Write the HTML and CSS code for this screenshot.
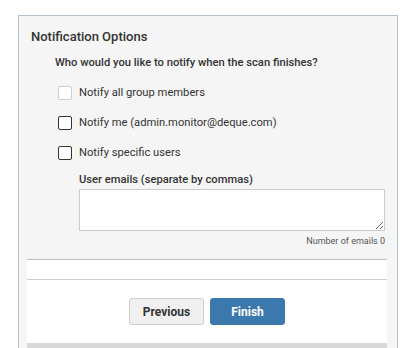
FILE: index.html
```html
<!DOCTYPE html>
<html lang="en">
<head>
    <meta charset="UTF-8">
    <meta name="viewport" content="width=device-width, initial-scale=1.0">
    <title>Notification Options</title>
    <link rel="stylesheet" href="styles.css">
</head>
<body>
    <div class="panel">
        <h2 class="panel_title">Notification Options</h2>
        <div class="options">
            <p class="question">Who would you like to notify when the scan finishes?</p>
            <label class="check check_disabled"><span class="box"></span>Notify all group members</label>
            <label class="check"><span class="box"></span>Notify me (admin.monitor@deque.com)</label>
            <label class="check"><span class="box"></span>Notify specific users</label>
            <div class="emails">
                <label for="emails" class="emails_label">User emails (separate by commas)</label>
                <textarea id="emails" class="emails_input"></textarea>
                <div class="emails_count">Number of emails 0</div>
            </div>
        </div>
        <div class="footer">
            <div class="footer_strip"></div>
            <div class="footer_buttons">
                <button class="btn">Previous</button>
                <button class="btn btn_primary">Finish</button>
            </div>
        </div>
    </div>
</body>
</html>
```

FILE: styles.css
```css
body {
    margin: 0;
    background-color: white;
    font-family: Roboto, "Liberation Sans", sans-serif;
    color: #333;
    height: 348px;
    overflow: hidden;
}
.panel {
    margin: 15px 0 0 18px;
    width: 378px;
    height: 360px;
    border: 1px solid #b6c3cc;
    border-bottom: none;
    background-color: #f5f5f5;
}
.panel_title {
    font-size: 13px;
    font-weight: 500;
    margin: 0;
    padding: 13px 0 0 12px;
    line-height: 16px;
}
.options {
    padding-left: 36px;
}
.question {
    font-size: 11.2px;
    font-weight: 500;
    margin: 11px 0 0 0;
    line-height: 14px;
}
.check {
    display: flex;
    align-items: center;
    font-size: 11.2px;
    line-height: 14px;
    margin-top: 16px;
    margin-left: 3px;
}
.check:first-of-type {
    margin-top: 16px;
}
.box {
    width: 12px;
    height: 12px;
    border: 1px solid #333;
    border-radius: 2px;
    background-color: white;
    margin-right: 7px;
    box-sizing: content-box;
}
.check_disabled .box {
    border-color: #ccc;
}
.emails {
    margin: 13px 0 0 24px;
    width: 306px;
}
.emails_label {
    display: block;
    font-size: 11.2px;
    font-weight: 500;
    line-height: 14px;
}
.emails_input {
    display: block;
    width: 306px;
    height: 42px;
    margin-top: 2px;
    box-sizing: border-box;
    border: 1px solid #ccc;
    background-color: white;
}
.emails_count {
    text-align: right;
    font-size: 9px;
    color: #555;
    margin-top: 4px;
    line-height: 12px;
}
.footer {
    margin: 12px 0 0 8px;
    width: 360px;
    background-color: white;
}
.footer_strip {
    height: 19px;
    border-top: 1px solid #b6c3cc;
    border-bottom: 1px solid #cfcfcf;
}
.footer_buttons {
    display: flex;
    justify-content: center;
    gap: 6px;
    padding: 18px 0 18px 0;
    border-bottom: 5px solid #d8d8d8;
}
.btn {
    width: 75px;
    height: 27px;
    font-family: Roboto, "Liberation Sans", sans-serif;
    font-size: 12px;
    font-weight: bold;
    color: #333;
    background-color: #f0f0f0;
    border: 1px solid #ccc;
    border-radius: 3px;
}
.btn_primary {
    background-color: #3b78ad;
    border-color: #3b78ad;
    color: white;
}
```
